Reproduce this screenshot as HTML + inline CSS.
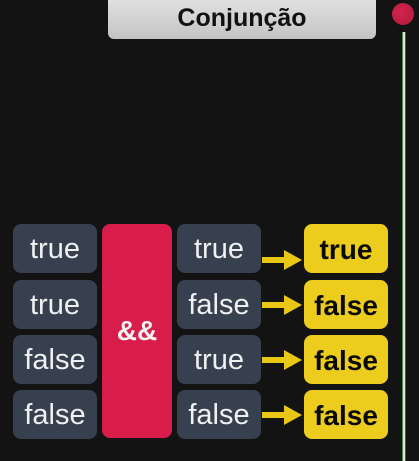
<!DOCTYPE html>
<html><head><style>
body{margin:0;width:419px;height:461px;background:#131313;position:relative;overflow:hidden;font-family:"Liberation Sans",sans-serif}
.t{position:absolute;left:108px;top:-6px;width:268px;height:45px;border-radius:6px;background:linear-gradient(#e4e4e4,#c4c4c4);text-align:center;line-height:48px;font-weight:bold;font-size:25px;color:#111}
.c{position:absolute;left:392px;top:3px;width:22px;height:22px;border-radius:50%;background:radial-gradient(circle at 40% 40%,#d4234e,#b01a3a)}
.l{position:absolute;left:403px;top:32px;width:2px;height:429px;background:#d8e8d8;box-shadow:-1px 0 0 #4a8a4a,1px 0 0 #8a3a3a}
.b{position:absolute;width:84px;height:49px;border-radius:8px;background:#37404e;color:#eef0f2;font-size:29px;text-align:center;line-height:50px}
.y{position:absolute;left:304px;width:84px;height:49px;border-radius:8px;background:#eccc1c;color:#0a0a0a;font-size:28px;font-weight:bold;text-align:center;line-height:52px}
.r{position:absolute;left:102px;top:224px;width:70px;height:214px;border-radius:8px;background:#d81d4b;color:#f2f2f2;font-weight:bold;font-size:28px;text-align:center;line-height:214px}
.a{position:absolute;left:262px;width:40px;height:22px}
</style></head><body>
<div class="t">Conjunção</div>
<div class="c"></div>
<div class="l"></div>
<div class="r">&amp;&amp;</div>
<div class="b" style="left:13px;top:224px">true</div>
<div class="b" style="left:13px;top:280px">true</div>
<div class="b" style="left:13px;top:335px">false</div>
<div class="b" style="left:13px;top:390px">false</div>
<div class="b" style="left:177px;top:224px">true</div>
<div class="b" style="left:177px;top:280px">false</div>
<div class="b" style="left:177px;top:335px">true</div>
<div class="b" style="left:177px;top:390px">false</div>
<div class="y" style="top:224px">true</div>
<div class="y" style="top:280px">false</div>
<div class="y" style="top:335px">false</div>
<div class="y" style="top:390px">false</div>
<svg class="a" style="top:249px" viewBox="0 0 40 22"><path d="M0 8h22V1l18 10-18 10v-7H0z" fill="#e8c814"/></svg>
<svg class="a" style="top:294px" viewBox="0 0 40 22"><path d="M0 8h22V1l18 10-18 10v-7H0z" fill="#e8c814"/></svg>
<svg class="a" style="top:349px" viewBox="0 0 40 22"><path d="M0 8h22V1l18 10-18 10v-7H0z" fill="#e8c814"/></svg>
<svg class="a" style="top:404px" viewBox="0 0 40 22"><path d="M0 8h22V1l18 10-18 10v-7H0z" fill="#e8c814"/></svg>
</body></html>
